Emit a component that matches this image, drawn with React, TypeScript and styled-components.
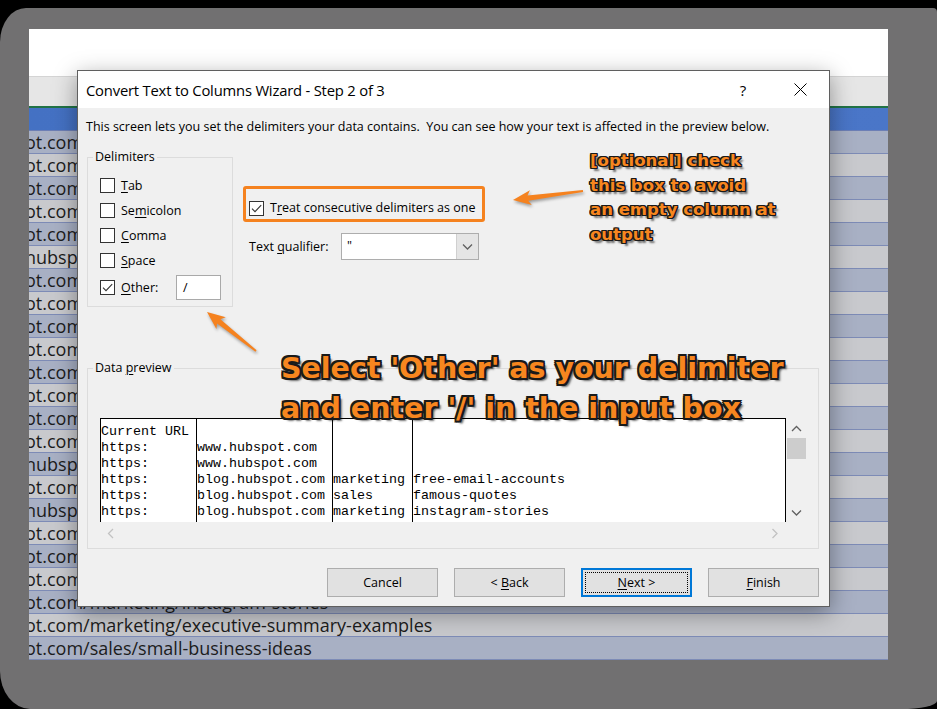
import React from 'react';
import styled, { createGlobalStyle } from 'styled-components';

const ui = `"Segoe UI", "Open Sans", "Noto Sans", sans-serif`;
const mono = `"Courier New", "Liberation Mono", monospace`;
const callout = `Verdana, "DejaVu Sans", sans-serif`;
const orange = '#f5821f';

const GlobalStyle = createGlobalStyle`
  html, body {
    margin: 0;
    padding: 0;
    background: #000;
  }
  body {
    width: 937px;
    height: 709px;
    overflow: hidden;
    font-family: ${ui};
  }
`;

const Frame = styled.div`
  margin-top: 8px;
  height: 701px;
  box-sizing: border-box;
  padding: 21px 49px 0 29px;
  background: #717071;
  border-radius: 26px 4px 36px 30px / 34px 4px 8px 38px;
`;

const Sheet = styled.div`
  position: relative;
  height: 631px;
  background: #fff;
  overflow: hidden;
  display: flex;
  flex-direction: column;
`;

const Ribbon = styled.div`
  flex: none;
  height: 47px;
  border-bottom: 1px solid #d4d4d4;
`;

const ColumnBand = styled.div`
  flex: none;
  height: 29px;
  background: #e6e6e6;
  border-bottom: 2px solid #217346;
`;

const HeaderRow = styled.div`
  flex: none;
  height: 22px;
  background: linear-gradient(90deg, #4471c3 0%, #4a76c8 100%);
  border-bottom: 1px solid #6d7fb5;
`;

const SheetRow = styled.div<{ $odd: boolean }>`
  flex: none;
  height: 22px;
  border-bottom: 1px solid #7d8bb6;
  background: ${(p) => (p.$odd ? '#c8c9cd' : '#a8b0c4')};
  font-family: "Open Sans", sans-serif;
  font-size: 18px;
  line-height: 22px;
  color: #1c1c1c;
  white-space: nowrap;
  overflow: hidden;

  span {
    display: inline-block;
    margin-left: -4px;
  }
`;

const Dialog = styled.div`
  position: absolute;
  left: 48px;
  top: 41px;
  width: 753px;
  height: 537px;
  box-sizing: border-box;
  border: 1px solid #5f5f5f;
  background: #f0f0f0;
  box-shadow: 0 6px 22px rgba(0, 0, 0, 0.38);
  display: flex;
  flex-direction: column;
  font-family: ${ui};
  font-size: 12.5px;
  color: #000;

  u {
    text-decoration: underline;
    text-underline-offset: 2px;
    text-decoration-thickness: 1px;
  }
`;

const TitleBar = styled.div`
  flex: none;
  height: 37px;
  background: #fff;
  display: flex;
  align-items: center;
  padding-left: 8px;
`;

const Title = styled.div`
  font-size: 14.8px;
  letter-spacing: -0.2px;
  color: #000;
`;

const TitleButtons = styled.div`
  margin-left: auto;
  margin-right: 6px;
  display: flex;
  gap: 11px;
  height: 100%;
`;

const TitleButton = styled.div`
  width: 46px;
  display: flex;
  align-items: center;
  justify-content: center;
  font-size: 15px;
`;

const Body = styled.div`
  flex: 1;
  display: flex;
  flex-direction: column;
  padding: 0 10px 9px 9px;
`;

const Description = styled.div`
  margin: 11px 0 0 -1px;
  line-height: 16px;
  white-space: nowrap;
`;

const OptionsRow = styled.div`
  margin-top: 14px;
  display: flex;
  align-items: flex-start;
  gap: 10px;
`;

const Group = styled.fieldset<{ $width?: number }>`
  margin: 0;
  box-sizing: border-box;
  width: ${(p) => (p.$width ? `${p.$width}px` : 'auto')};
  border: 1px solid #dcdcdc;
  min-width: 0;

  legend {
    padding: 0 2px;
    margin-left: -7px;
    line-height: 16px;
  }
`;

const DelimiterGroup = styled(Group)`
  padding: 8px 11px 6px 12px;
`;

const CheckRow = styled.label<{ $gapTop?: number }>`
  display: flex;
  align-items: center;
  gap: 6px;
  height: 25px;
  margin-top: ${(p) => p.$gapTop || 0}px;
  line-height: 16px;
`;

const Box = styled.span`
  flex: none;
  width: 13px;
  height: 13px;
  border: 1px solid #333;
  background: #fff;
  display: flex;
  align-items: center;
  justify-content: center;
`;

const SmallInput = styled.div`
  margin-left: auto;
  width: 45px;
  height: 25px;
  box-sizing: border-box;
  border: 1px solid #a9a9a9;
  background: #fff;
  padding-left: 6px;
  line-height: 23px;
`;

const RightColumn = styled.div`
  margin-top: 37px;
  display: flex;
  flex-direction: column;
`;

const Highlight = styled.label`
  width: 242px;
  box-sizing: border-box;
  border: 3px solid ${orange};
  border-radius: 3px;
  padding: 11px 6px 3px 3px;
  display: flex;
  align-items: center;
  gap: 6px;
  line-height: 16px;
  white-space: nowrap;
`;

const QualifierRow = styled.div`
  margin-top: 11px;
  padding-left: 6px;
  display: flex;
  align-items: center;
`;

const QualifierLabel = styled.span`
  width: 92px;
`;

const Select = styled.div`
  width: 138px;
  height: 27px;
  box-sizing: border-box;
  border: 1px solid #adadad;
  background: #fff;
  display: flex;
`;

const SelectValue = styled.span`
  flex: 1;
  padding-left: 5px;
  line-height: 24px;
`;

const SelectButton = styled.span`
  width: 21px;
  background: #e5e5e5;
  border-left: 1px solid #d0d0d0;
  display: flex;
  align-items: center;
  justify-content: center;
`;

const PreviewGroup = styled(Group)`
  margin-top: 53px;
  padding: 42px 12px 4px 12px;
`;

const PreviewGrid = styled.div`
  display: grid;
  grid-template-columns: 686px 20px;
  grid-template-rows: 104px 22px;
`;

const PreviewBox = styled.div`
  box-sizing: border-box;
  border: 1px solid #000;
  border-bottom: none;
  background: #fff;
  display: flex;
  overflow: hidden;
  font-family: ${mono};
  font-size: 13.33px;
  line-height: 16px;
  color: #000;
`;

const PreviewColumn = styled.div<{ $width?: number; $divider?: boolean }>`
  flex: ${(p) => (p.$width ? `0 0 ${p.$width}px` : '1')};
  box-sizing: border-box;
  border-left: ${(p) => (p.$divider ? '1px solid #000' : 'none')};
  padding-top: 5px;
  white-space: pre;

  div {
    height: 16px;
  }
`;

const VScroll = styled.div`
  display: flex;
  flex-direction: column;
  align-items: center;
  padding: 7px 0 5px;
`;

const Thumb = styled.div`
  margin-top: 5px;
  width: 19px;
  height: 21px;
  background: #cdcdcd;
`;

const HScroll = styled.div`
  display: flex;
  align-items: center;
  justify-content: space-between;
  padding: 0 7px 0 7px;
`;

const ButtonRow = styled.div`
  margin-top: 19px;
  display: flex;
  justify-content: flex-end;
  gap: 16px;
`;

const Button = styled.div<{ $default?: boolean }>`
  position: relative;
  width: 111px;
  height: 29px;
  box-sizing: border-box;
  border: ${(p) => (p.$default ? '2px solid #0078d7' : '1px solid #adadad')};
  background: #e1e1e1;
  display: flex;
  align-items: center;
  justify-content: center;

  &::after {
    content: '';
    display: ${(p) => (p.$default ? 'block' : 'none')};
    position: absolute;
    inset: 2px;
    border: 1px dotted #000;
  }
`;

const Overlay = styled.div`
  position: absolute;
  inset: 0;
  pointer-events: none;

  svg {
    position: absolute;
    left: 0;
    top: 0;
    overflow: visible;
  }
`;

const Callout = styled.div<{ $size: number; $line: number; $stroke: number }>`
  position: absolute;
  font-family: ${callout};
  font-weight: bold;
  font-size: ${(p) => p.$size}px;
  line-height: ${(p) => p.$line}px;
  color: #f7861f;
  white-space: nowrap;
  text-shadow: ${(p) => {
    const s = p.$stroke;
    return [
      `-${s}px -${s}px 0 #1a1a1a`,
      `${s}px -${s}px 0 #1a1a1a`,
      `-${s}px ${s}px 0 #1a1a1a`,
      `${s}px ${s}px 0 #1a1a1a`,
      `0 -${s}px 0 #1a1a1a`,
      `0 ${s}px 0 #1a1a1a`,
      `-${s}px 0 0 #1a1a1a`,
      `${s}px 0 0 #1a1a1a`,
      `${s + 1.5}px ${s + 1.5}px 2px rgba(0,0,0,0.55)`,
    ].join(', ');
  }};
`;

const rows = [
  'ot.com/marketing/free-email-accounts',
  'ot.com/sales/famous-quotes',
  'ot.com/marketing/instagram-stories',
  'ot.com/marketing/how-to-write-a-press-release',
  'ot.com/service/customer-service-tips',
  'hubspot.com/products/crm',
  'ot.com/marketing/blogging-tips',
  'ot.com/sales/cold-calling',
  'ot.com/marketing/seo',
  'ot.com/marketing/content-marketing',
  'ot.com/sales/sales-pitch',
  'ot.com/marketing/email-marketing',
  'ot.com/marketing/social-media',
  'ot.com/service/customer-retention',
  'hubspot.com/pricing',
  'ot.com/marketing/brand-awareness',
  'hubspot.com/resources',
  'ot.com/sales/closing-techniques',
  'ot.com/marketing/landing-pages',
  'ot.com/marketing/lead-generation',
  'ot.com/marketing/instagram-stories',
  'ot.com/marketing/executive-summary-examples',
  'ot.com/sales/small-business-ideas',
];

const previewColumns: { width?: number; divider?: boolean; lines: string[] }[] = [
  { width: 95, lines: ['Current URL', 'https:', 'https:', 'https:', 'https:', 'https:'] },
  {
    width: 136,
    divider: true,
    lines: ['', 'www.hubspot.com', 'www.hubspot.com', 'blog.hubspot.com', 'blog.hubspot.com', 'blog.hubspot.com'],
  },
  { width: 80, divider: true, lines: ['', '', '', 'marketing', 'sales', 'marketing'] },
  {
    divider: true,
    lines: ['', '', '', 'free-email-accounts', 'famous-quotes', 'instagram-stories'],
  },
];

const CheckMark = () => (
  <svg width="13" height="13" viewBox="0 0 13 13">
    <path d="M2 6.6 L5 9.6 L11.2 3.2" fill="none" stroke="#333" strokeWidth="1.1" />
  </svg>
);

const Chevron = ({ dir, color = '#606060' }: { dir: 'up' | 'down' | 'left' | 'right'; color?: string }) => {
  const d = {
    up: 'M1 6 L5.5 1.5 L10 6',
    down: 'M1 1.5 L5.5 6 L10 1.5',
    left: 'M6 1 L1.5 5.5 L6 10',
    right: 'M1.5 1 L6 5.5 L1.5 10',
  }[dir];
  const vertical = dir === 'up' || dir === 'down';
  return (
    <svg width={vertical ? 11 : 8} height={vertical ? 8 : 11} viewBox={vertical ? '0 0 11 8' : '0 0 8 11'}>
      <path d={d} fill="none" stroke={color} strokeWidth="1.3" />
    </svg>
  );
};

// tapered arrow from tail to tip
const arrowPoints = (x1: number, y1: number, x2: number, y2: number) => {
  const dx = x2 - x1;
  const dy = y2 - y1;
  const len = Math.hypot(dx, dy);
  const ux = dx / len;
  const uy = dy / len;
  const nx = -uy;
  const ny = ux;
  const hl = 15;
  const hw = 7.5;
  const bx = x2 - ux * hl;
  const by = y2 - uy * hl;
  const wx = x2 - ux * (hl + 3);
  const wy = y2 - uy * (hl + 3);
  const pts = [
    [x1 + nx * 1, y1 + ny * 1],
    [bx + nx * 2.6, by + ny * 2.6],
    [wx + nx * hw, wy + ny * hw],
    [x2, y2],
    [wx - nx * hw, wy - ny * hw],
    [bx - nx * 2.6, by - ny * 2.6],
    [x1 - nx * 1, y1 - ny * 1],
  ];
  return pts.map((p) => `${p[0].toFixed(1)},${p[1].toFixed(1)}`).join(' ');
};

const Arrows = () => (
  <svg width="751" height="535" style={{ filter: 'drop-shadow(1px 2px 1.5px rgba(0,0,0,0.35))' }}>
    <polygon points={arrowPoints(505, 120, 435, 129)} fill={orange} />
    <polygon points={arrowPoints(178, 280, 129, 241)} fill={orange} />
  </svg>
);

const CloseIcon = () => (
  <svg width="13" height="13" viewBox="0 0 13 13">
    <path d="M0.5 0.5 L12.5 12.5 M12.5 0.5 L0.5 12.5" stroke="#000" strokeWidth="1" />
  </svg>
);

const App: React.FC = () => {
  return (
    <>
      <GlobalStyle />
      <Frame>
        <Sheet>
          <Ribbon />
          <ColumnBand />
          <HeaderRow />
          {rows.map((text, i) => (
            <SheetRow key={i} $odd={i % 2 === 1}>
              <span>{text}</span>
            </SheetRow>
          ))}

          <Dialog>
            <TitleBar>
              <Title>Convert Text to Columns Wizard - Step 2 of 3</Title>
              <TitleButtons>
                <TitleButton>?</TitleButton>
                <TitleButton>
                  <CloseIcon />
                </TitleButton>
              </TitleButtons>
            </TitleBar>

            <Body>
              <Description>
                This screen lets you set the delimiters your data contains.&nbsp; You can see how your text is
                affected in the preview below.
              </Description>

              <OptionsRow>
                <DelimiterGroup $width={146}>
                  <legend>Delimiters</legend>
                  <CheckRow>
                    <Box />
                    <span>
                      <u>T</u>ab
                    </span>
                  </CheckRow>
                  <CheckRow>
                    <Box />
                    <span>
                      Se<u>m</u>icolon
                    </span>
                  </CheckRow>
                  <CheckRow>
                    <Box />
                    <span>
                      <u>C</u>omma
                    </span>
                  </CheckRow>
                  <CheckRow>
                    <Box />
                    <span>
                      <u>S</u>pace
                    </span>
                  </CheckRow>
                  <CheckRow $gapTop={2}>
                    <Box>
                      <CheckMark />
                    </Box>
                    <span>
                      <u>O</u>ther:
                    </span>
                    <SmallInput>/</SmallInput>
                  </CheckRow>
                </DelimiterGroup>

                <RightColumn>
                  <Highlight>
                    <Box>
                      <CheckMark />
                    </Box>
                    <span>
                      T<u>r</u>eat consecutive delimiters as one
                    </span>
                  </Highlight>
                  <QualifierRow>
                    <QualifierLabel>
                      Text <u>q</u>ualifier:
                    </QualifierLabel>
                    <Select>
                      <SelectValue>"</SelectValue>
                      <SelectButton>
                        <Chevron dir="down" />
                      </SelectButton>
                    </Select>
                  </QualifierRow>
                </RightColumn>
              </OptionsRow>

              <PreviewGroup>
                <legend>
                  Data <u>p</u>review
                </legend>
                <PreviewGrid>
                  <PreviewBox>
                    {previewColumns.map((col, ci) => (
                      <PreviewColumn key={ci} $width={col.width} $divider={col.divider}>
                        {col.lines.map((line, li) => (
                          <div key={li}>{line}</div>
                        ))}
                      </PreviewColumn>
                    ))}
                  </PreviewBox>
                  <VScroll>
                    <Chevron dir="up" />
                    <Thumb />
                    <div style={{ flex: 1 }} />
                    <Chevron dir="down" />
                  </VScroll>
                  <HScroll>
                    <Chevron dir="left" color="#c2c2c2" />
                    <Chevron dir="right" color="#c2c2c2" />
                  </HScroll>
                  <div />
                </PreviewGrid>
              </PreviewGroup>

              <ButtonRow>
                <Button>Cancel</Button>
                <Button>
                  &lt;&nbsp;<u>B</u>ack
                </Button>
                <Button $default>
                  <u>N</u>ext &gt;
                </Button>
                <Button>
                  <u>F</u>inish
                </Button>
              </ButtonRow>
            </Body>

            <Overlay>
              <Arrows />
              <Callout $size={16.5} $line={24.5} $stroke={1.3} style={{ left: 512, top: 78 }}>
                [optional] check
                <br />
                this box to avoid
                <br />
                an empty column at
                <br />
                output
              </Callout>
              <Callout $size={28.5} $line={40} $stroke={1.8} style={{ left: 203, top: 278 }}>
                Select 'Other' as your delimiter
                <br />
                and enter '/' in the input box
              </Callout>
            </Overlay>
          </Dialog>
        </Sheet>
      </Frame>
    </>
  );
};

export default App;
